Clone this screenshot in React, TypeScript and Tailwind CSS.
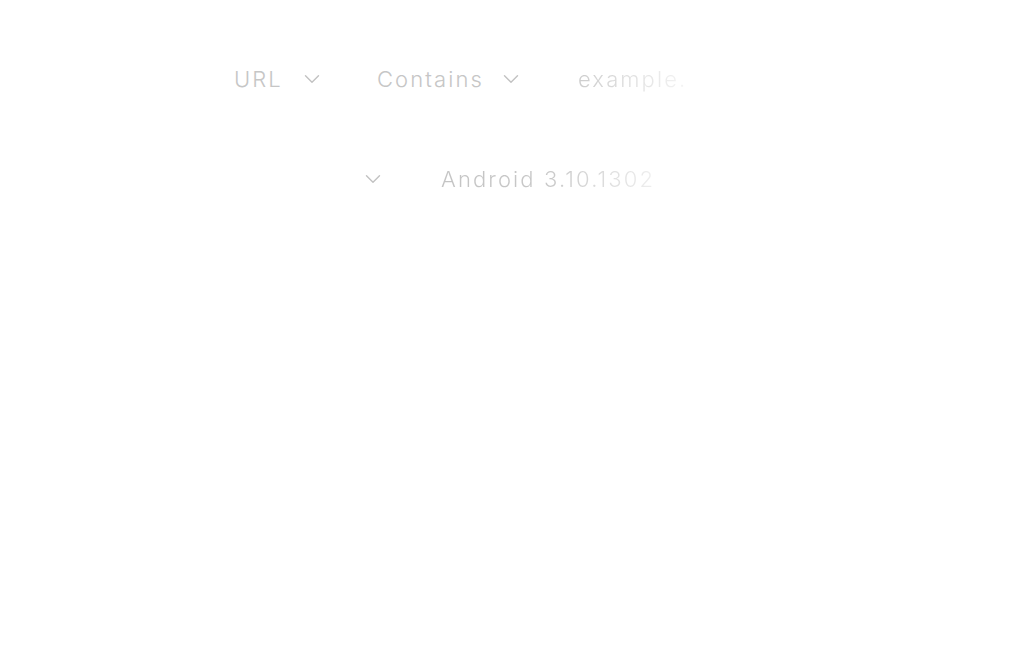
import React from 'react';
import { ChevronDown } from 'lucide-react';

function Select({ label, labelClass, className }: { label?: string; labelClass?: string; className?: string }) {
  return (
    <div className={`flex items-center shrink-0 ${className ?? ''}`}>
      {label && <span className={labelClass}>{label}</span>}
      <ChevronDown className="w-[26px] h-[26px] text-[#c2c2c2] shrink-0" strokeWidth={1.3} />
    </div>
  );
}

export default function App() {
  return (
    <div
      className="w-[1024px] h-[670px] bg-white text-[#c6c6c6] text-[22px] font-light tracking-[2.1px] pt-[64px]"
      style={{ fontFamily: 'Inter, "Liberation Sans", sans-serif' }}
    >
      <div className="flex items-center h-[30px] pl-[234px]">
        <Select label="URL" labelClass="w-[65px]" className="w-[143px]" />
        <Select label="Contains" labelClass="w-[121px]" className="w-[201px]" />
        <span className="bg-gradient-to-r from-[#cdcdcd] to-[#f6f6f6] bg-clip-text text-transparent pr-1">
          example.
        </span>
      </div>
      <div className="flex items-center h-[30px] mt-[70px] pl-[360px]">
        <Select className="w-[81px]" />
        <span className="bg-gradient-to-r from-[#c4c4c4] via-[#c8c8c8] to-[#efefef] bg-clip-text text-transparent">
          Android 3.10.1302
        </span>
      </div>
    </div>
  );
}
